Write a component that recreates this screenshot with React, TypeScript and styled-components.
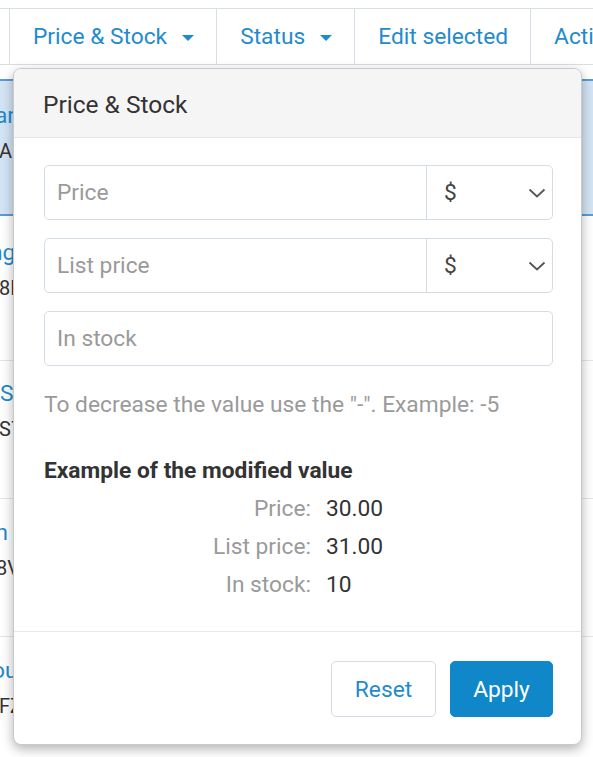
import styled, { createGlobalStyle } from "styled-components";

const GlobalStyle = createGlobalStyle`
  body {
    margin: 0;
    background: #ffffff;
    font-family: Roboto, "Liberation Sans", Arial, sans-serif;
    color: #333333;
    overflow: hidden;
  }
`;

const Page = styled.div`
  position: relative;
  width: 593px;
  height: 757px;
  overflow: hidden;
`;

const Toolbar = styled.div`
  display: flex;
  margin-top: 8px;
  height: 55px;
  border-top: 1px solid #d6dee6;
  border-bottom: 1px solid #d6dee6;
  white-space: nowrap;
`;

const ToolSpacer = styled.div`
  width: 9px;
  flex: none;
  border-right: 1px solid #d6dee6;
`;

const ToolButton = styled.div`
  display: flex;
  align-items: center;
  gap: 15px;
  flex: none;
  padding: 0 22px 0 23px;
  border-right: 1px solid #d6dee6;
  color: #1f8bcd;
  font-size: 22.75px;
`;

const Caret = styled.span`
  width: 0;
  height: 0;
  border-left: 6px solid transparent;
  border-right: 6px solid transparent;
  border-top: 6px solid #1f8bcd;
  margin-top: 3px;
`;

const Table = styled.div`
  margin-top: 14px;
`;

const Row = styled.div<{ $selected?: boolean; $height: number; $pad: number }>`
  height: ${(p) => p.$height}px;
  padding-top: ${(p) => p.$pad}px;
  box-sizing: border-box;
  background: ${(p) => (p.$selected ? "#d3e4f4" : "#ffffff")};
  border-top: ${(p) => (p.$selected ? "2px solid #5a9bd8" : "none")};
  border-bottom: ${(p) => (p.$selected ? "2px solid #5a9bd8" : "1px solid #e2e6ea")};
  white-space: nowrap;
`;

const RowName = styled.div<{ $shift: number }>`
  color: #1f8bcd;
  font-size: 22.75px;
  line-height: 34px;
  margin-left: ${(p) => p.$shift}px;
`;

const RowCode = styled.div<{ $shift: number }>`
  color: #333333;
  font-size: 20px;
  line-height: 36px;
  margin-left: ${(p) => p.$shift}px;
`;

const Popover = styled.div`
  position: absolute;
  top: 68px;
  left: 13px;
  width: 569px;
  box-sizing: border-box;
  background: #ffffff;
  border: 1px solid #c9c9c9;
  border-radius: 8px;
  box-shadow: 0 4px 12px rgba(0, 0, 0, 0.3);
  overflow: hidden;
`;

const Header = styled.div`
  height: 69px;
  display: flex;
  align-items: center;
  padding: 2px 29px 0;
  box-sizing: border-box;
  background: #f5f5f5;
  border-bottom: 1px solid #e6e6e6;
  font-size: 24.5px;
  color: #333333;
`;

const Body = styled.div`
  display: flex;
  flex-direction: column;
  padding: 27px 28px 27px 30px;
  font-size: 22.75px;
`;

const Fields = styled.div`
  display: flex;
  flex-direction: column;
  gap: 18px;
`;

const InputGroup = styled.div`
  display: flex;
  height: 55px;
  box-sizing: border-box;
  border: 1px solid #d4dde6;
  border-radius: 5px;
`;

const Field = styled.div`
  flex: 1;
  display: flex;
  align-items: center;
  padding-left: 12px;
  color: #9a9a9a;
`;

const Select = styled.div`
  width: 126px;
  display: flex;
  align-items: center;
  justify-content: space-between;
  padding: 0 6px 0 17px;
  box-sizing: border-box;
  border-left: 1px solid #d4dde6;
  color: #444444;
`;

const Hint = styled.div`
  margin-top: 24px;
  line-height: 30px;
  color: #9a9a9a;
`;

const Heading = styled.div`
  margin-top: 36px;
  line-height: 30px;
  font-weight: 700;
  color: #333333;
`;

const Example = styled.div`
  margin-top: 4px;
  display: grid;
  grid-template-columns: 267px 1fr;
  column-gap: 15px;
  line-height: 38px;
`;

const Label = styled.div`
  text-align: right;
  color: #9a9a9a;
`;

const Value = styled.div`
  color: #333333;
`;

const Footer = styled.div`
  display: flex;
  justify-content: flex-end;
  gap: 14px;
  padding: 29px 28px 27px;
  border-top: 1px solid #e8e8e8;
`;

const Button = styled.button<{ $primary?: boolean; $width: number }>`
  width: ${(p) => p.$width}px;
  height: 56px;
  padding: 0;
  border-radius: 5px;
  font-family: inherit;
  font-size: 22.75px;
  border: 1px solid ${(p) => (p.$primary ? "#0f87c9" : "#d4dde6")};
  background: ${(p) => (p.$primary ? "#0f87c9" : "#ffffff")};
  color: ${(p) => (p.$primary ? "#ffffff" : "#1f8bcd")};
`;

function Chevron() {
  return (
    <svg width="18" height="10" viewBox="0 0 18 10">
      <polyline points="1.5,1.5 9,8.5 16.5,1.5" fill="none" stroke="#555" strokeWidth="1.8" />
    </svg>
  );
}

const rows = [
  { name: "arbon Case", code: "A10024", shift: -5, codeShift: -1, selected: true, height: 137, pad: 18 },
  { name: "ng Speaker", code: "8H2201", shift: -10, codeShift: -1, selected: false, height: 145, pad: 20 },
  { name: "Smart Watch", code: "S70031", shift: 0, codeShift: -1, selected: false, height: 138, pad: 16 },
  { name: "m Lamp", code: "8V1150", shift: -12, codeShift: -4, selected: false, height: 138, pad: 17 },
  { name: "ouch Bag", code: "FZ4412", shift: -8, codeShift: -1, selected: false, height: 138, pad: 17 },
];

function App() {
  return (
    <Page>
      <GlobalStyle />
      <Toolbar>
        <ToolSpacer />
        <ToolButton>
          Price &amp; Stock <Caret />
        </ToolButton>
        <ToolButton>
          Status <Caret />
        </ToolButton>
        <ToolButton>Edit selected</ToolButton>
        <ToolButton>Actions</ToolButton>
      </Toolbar>
      <Table>
        {rows.map((r) => (
          <Row key={r.code} $selected={r.selected} $height={r.height} $pad={r.pad}>
            <RowName $shift={r.shift}>{r.name}</RowName>
            <RowCode $shift={r.codeShift}>{r.code}</RowCode>
          </Row>
        ))}
      </Table>
      <Popover>
        <Header>Price &amp; Stock</Header>
        <Body>
          <Fields>
            <InputGroup>
              <Field>Price</Field>
              <Select>
                $ <Chevron />
              </Select>
            </InputGroup>
            <InputGroup>
              <Field>List price</Field>
              <Select>
                $ <Chevron />
              </Select>
            </InputGroup>
            <InputGroup>
              <Field>In stock</Field>
            </InputGroup>
          </Fields>
          <Hint>To decrease the value use the "-". Example: -5</Hint>
          <Heading>Example of the modified value</Heading>
          <Example>
            <Label>Price:</Label>
            <Value>30.00</Value>
            <Label>List price:</Label>
            <Value>31.00</Value>
            <Label>In stock:</Label>
            <Value>10</Value>
          </Example>
        </Body>
        <Footer>
          <Button $width={105}>Reset</Button>
          <Button $primary $width={103}>
            Apply
          </Button>
        </Footer>
      </Popover>
    </Page>
  );
}

export default App;
